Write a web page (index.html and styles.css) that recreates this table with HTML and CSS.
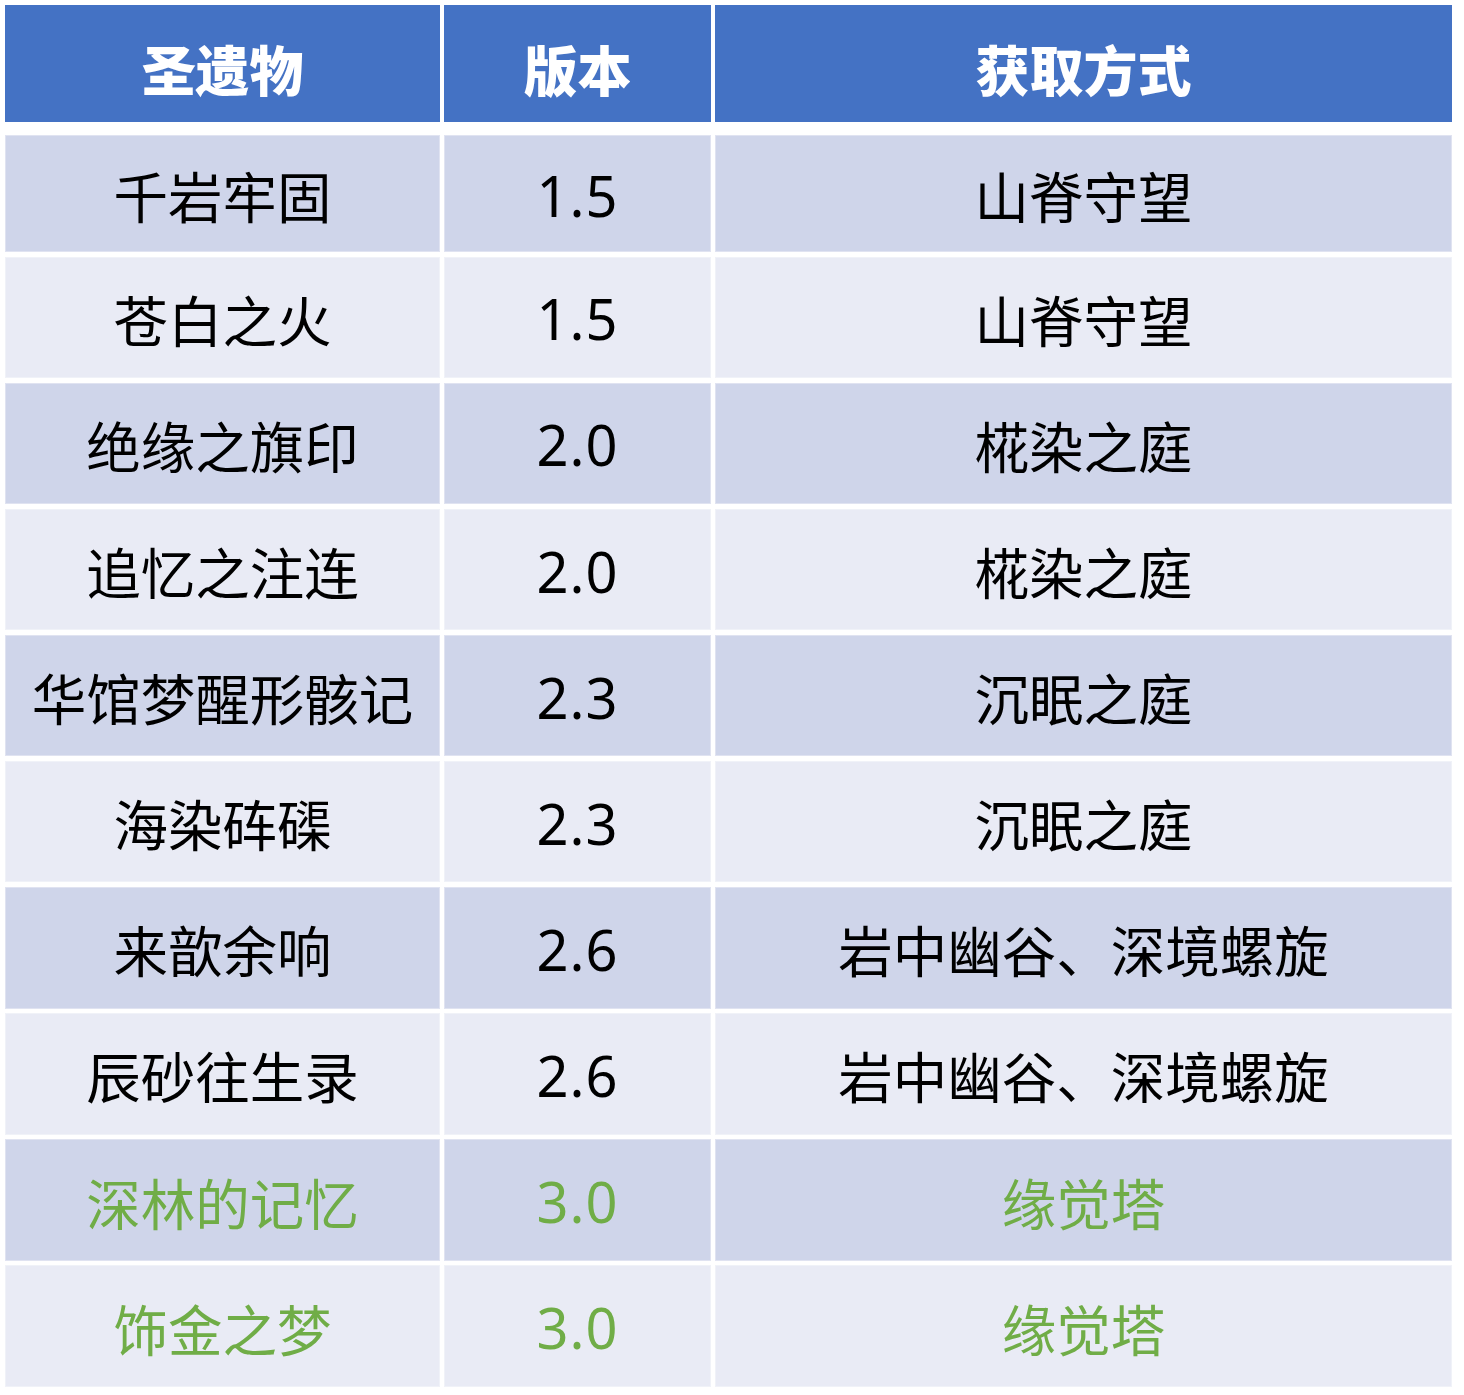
FILE: index.html
```html
<!DOCTYPE html>
<html lang="zh-CN">
<head>
<meta charset="utf-8">
<title>圣遗物</title>
<link rel="stylesheet" href="styles.css">
</head>
<body>
<div class="table">
  <div class="head">
    <div class="cell">圣遗物</div>
    <div class="cell">版本</div>
    <div class="cell">获取方式</div>
  </div>
  <div class="body">
    <div class="cell odd first">千岩牢固</div><div class="cell odd first num">1.5</div><div class="cell odd first">山脊守望</div>
    <div class="cell even">苍白之火</div><div class="cell even num">1.5</div><div class="cell even">山脊守望</div>
    <div class="cell odd">绝缘之旗印</div><div class="cell odd num">2.0</div><div class="cell odd">椛染之庭</div>
    <div class="cell even">追忆之注连</div><div class="cell even num">2.0</div><div class="cell even">椛染之庭</div>
    <div class="cell odd">华馆梦醒形骸记</div><div class="cell odd num">2.3</div><div class="cell odd">沉眠之庭</div>
    <div class="cell even">海染砗磲</div><div class="cell even num">2.3</div><div class="cell even">沉眠之庭</div>
    <div class="cell odd">来歆余响</div><div class="cell odd num">2.6</div><div class="cell odd">岩中幽谷、深境螺旋</div>
    <div class="cell even">辰砂往生录</div><div class="cell even num">2.6</div><div class="cell even">岩中幽谷、深境螺旋</div>
    <div class="cell odd new">深林的记忆</div><div class="cell odd new num">3.0</div><div class="cell odd new">缘觉塔</div>
    <div class="cell even new">饰金之梦</div><div class="cell even new num">3.0</div><div class="cell even new">缘觉塔</div>
  </div>
</div>
</body>
</html>
```
FILE: styles.css
```css
html, body {
  margin: 0;
  padding: 0;
  background: #ffffff;
}
body {
  width: 1464px;
  height: 1395px;
  font-family: "Noto Sans CJK SC", "Noto Sans", sans-serif;
}
.table {
  padding: 5px 0 0 5px;
  display: flex;
  flex-direction: column;
  gap: 13px;
}
.head,
.body {
  display: grid;
  grid-template-columns: 435px 267px 737px;
  column-gap: 4px;
}
.head {
  grid-template-rows: 117px;
}
.body {
  grid-template-rows: 117px repeat(9, 121.5px);
  row-gap: 4.6px;
}
.cell {
  display: flex;
  align-items: center;
  justify-content: center;
  box-sizing: border-box;
  white-space: nowrap;
}
.head .cell {
  background: #4472c4;
  color: #ffffff;
  font-size: 54px;
  font-weight: 900;
  padding-top: 10px;
}
.body .cell {
  font-size: 54.5px;
  font-weight: 400;
  color: #000000;
  padding-top: 2px;
  box-shadow: inset 0 0 0 1px rgba(255, 255, 255, 0.35);
}
.body .cell.num {
  font-family: "Noto Sans", sans-serif;
  font-size: 56px;
  letter-spacing: 1px;
}
.odd {
  background: #cfd5ea;
}
.even {
  background: #e9ebf5;
}
.body .cell.new {
  color: #70ad47;
}
```
